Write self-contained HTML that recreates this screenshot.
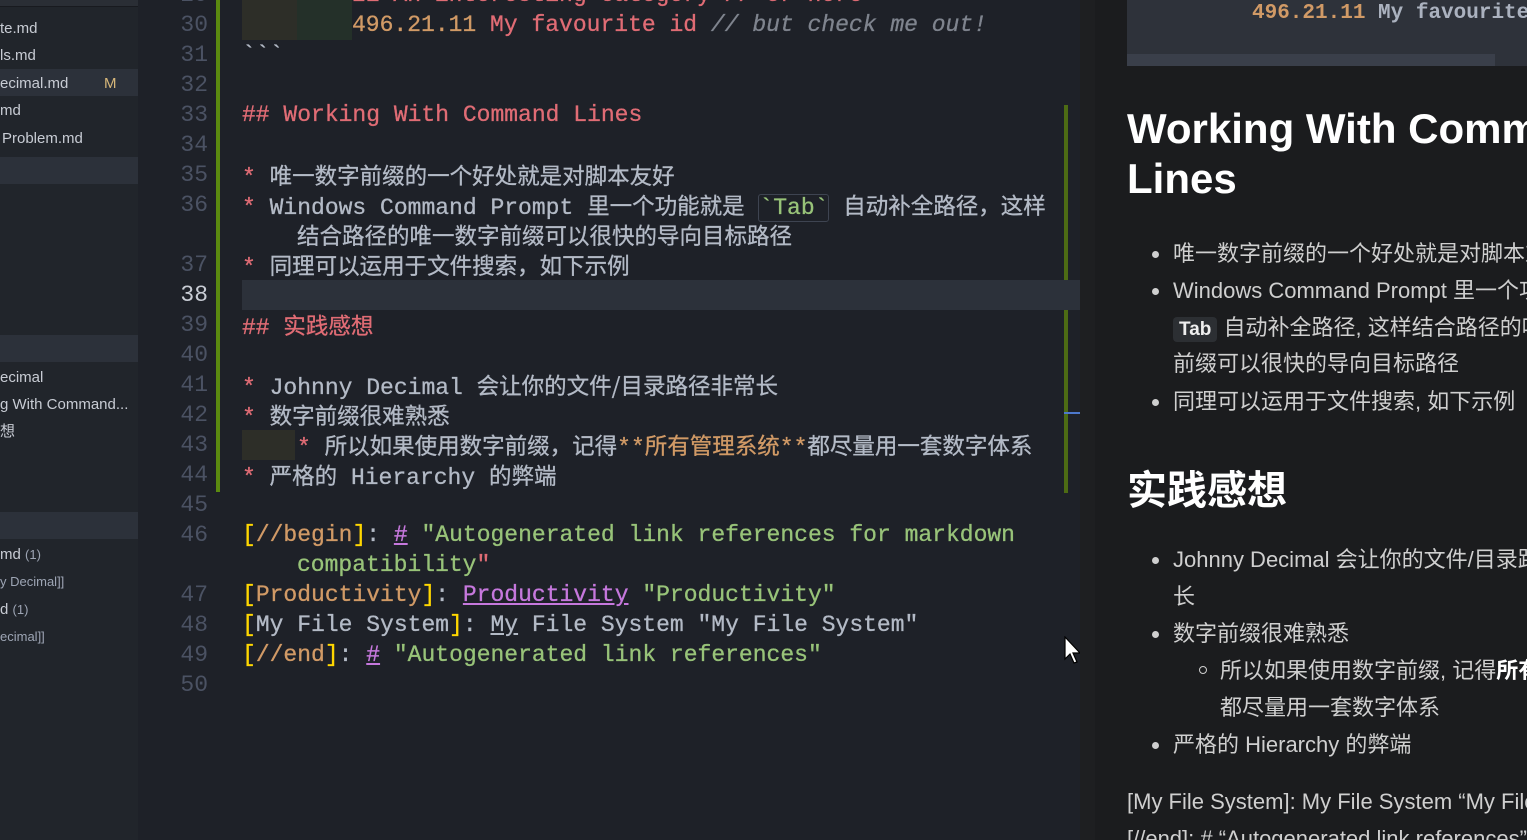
<!DOCTYPE html>
<html><head><meta charset="utf-8"><style>
*{margin:0;padding:0;box-sizing:border-box}
body{width:1527px;height:840px;overflow:hidden;background:#1e2128;position:relative;font-family:"Liberation Sans","Noto Sans CJK SC",sans-serif}
.sb{position:absolute;left:0;top:0;width:138px;height:840px;background:#21252b;overflow:hidden}
.sb div{position:absolute;left:0;white-space:nowrap;font-size:15px;color:#c8ccd4;line-height:20px}
.band{background:#2c313a;height:27px;width:138px}
.ed{position:absolute;left:138px;top:0;width:942px;height:840px;background:#1e2128;overflow:hidden}
.ln{position:absolute;left:0;width:70px;text-align:right;font:23px "Liberation Mono",monospace;color:#4b5263;line-height:30px}
.cl{position:absolute;left:104px;white-space:pre;font:23px "Liberation Mono","Noto Sans CJK SC",monospace;color:#b3bac6;line-height:30px;-webkit-text-stroke:0.3px currentColor}
.r{color:#e06c75}.o{color:#d19a66}.g{color:#98c379}.p{color:#c678dd}.y{color:#e5c07b}.gy{color:#7f848e;font-style:italic}.yb{color:#ffd700}
.cj{font-family:"Noto Sans CJK SC",sans-serif;font-size:22.5px}
.pv{position:absolute;left:1080px;top:0;width:447px;height:840px;background:#1b1c1e;overflow:hidden;color:#cfcfcf}
.pv .t{position:absolute;white-space:nowrap;font-size:22px;line-height:36px}
.dot{position:absolute;width:7px;height:7px;border-radius:50%;background:#cfcfcf}
</style></head><body>
<div class="sb">
 <div style="top:0;height:7px;width:138px;background:#2a2e35;border-bottom:1px solid #181a1f"></div>
 <div style="top:19px">te.md</div>
 <div style="top:46px">ls.md</div>
 <div class="band" style="top:69px"></div>
 <div style="top:74px">ecimal.md</div>
 <div style="top:74px;left:104px;color:#d7b77a">M</div>
 <div style="top:101px">md</div>
 <div style="top:129px;left:2px">Problem.md</div>
 <div class="band" style="top:157px"></div>
 <div class="band" style="top:335px"></div>
 <div style="top:368px">ecimal</div>
 <div style="top:395px">g With Command...</div>
 <div style="top:422px">想</div>
 <div class="band" style="top:512px"></div>
 <div style="top:545px">md <span style="font-size:13px;color:#9da5b4">(1)</span></div>
 <div style="top:572px;font-size:13px;color:#9da5b4">y Decimal]]</div>
 <div style="top:600px">d <span style="font-size:13px;color:#9da5b4">(1)</span></div>
 <div style="top:627px;font-size:13px;color:#9da5b4">ecimal]]</div>
</div>
<div class="ed">
 <div style="position:absolute;left:78px;top:0;width:4px;height:492px;background:#5b8a10"></div>
 <div style="position:absolute;left:926px;top:105px;width:4px;height:388px;background:#4d6b14"></div>
 <div style="position:absolute;left:926px;top:412px;width:16px;height:2px;background:#4d78cc"></div>
 <div style="position:absolute;left:104px;top:0;width:55px;height:40px;background:#2d2e28"></div>
 <div style="position:absolute;left:159px;top:0;width:55px;height:40px;background:#243029"></div>
 <div style="position:absolute;left:104px;top:430px;width:53px;height:30px;background:#2d2e28"></div>
 <div style="position:absolute;left:104px;top:280px;width:838px;height:30px;background:#2c313a"></div>
 <div class="ln" style="top:-20px">29</div>
 <div class="ln" style="top:10px">30</div><div class="ln" style="top:40px">31</div><div class="ln" style="top:70px">32</div>
 <div class="ln" style="top:100px">33</div><div class="ln" style="top:130px">34</div><div class="ln" style="top:160px">35</div>
 <div class="ln" style="top:190px">36</div><div class="ln" style="top:250px">37</div><div class="ln" style="top:280px;color:#c8ccd4">38</div>
 <div class="ln" style="top:310px">39</div><div class="ln" style="top:340px">40</div><div class="ln" style="top:370px">41</div>
 <div class="ln" style="top:400px">42</div><div class="ln" style="top:430px">43</div><div class="ln" style="top:460px">44</div>
 <div class="ln" style="top:490px">45</div><div class="ln" style="top:520px">46</div><div class="ln" style="top:580px">47</div>
 <div class="ln" style="top:610px">48</div><div class="ln" style="top:640px">49</div><div class="ln" style="top:670px">50</div>
 <div class="cl r" style="top:-20px;left:214px">21 An interesting category // or here</div>
 <div class="cl" style="top:10px;left:214px"><span class="o">496.21.11</span> <span class="r">My favourite id</span> <span class="gy">// but check me out!</span></div>
 <div class="cl" style="top:40px">&#96;&#96;&#96;</div>
 <div class="cl r" style="top:100px">## Working With Command Lines</div>
 <div class="cl" style="top:160px"><span class="r">*</span> <span class="cj">唯一数字前缀的一个好处就是对脚本友好</span></div>
 <div class="cl" style="top:190px"><span class="r">*</span> Windows Command Prompt <span class="cj">里一个功能就是</span> <span class="g" style="border:1px solid #3e4451;border-radius:3px">&#96;Tab&#96;</span> <span class="cj">自动补全路径，这样</span></div>
 <div class="cl" style="top:220px;left:159px"><span class="cj">结合路径的唯一数字前缀可以很快的导向目标路径</span></div>
 <div class="cl" style="top:250px"><span class="r">*</span> <span class="cj">同理可以运用于文件搜索，如下示例</span></div>
 <div class="cl r" style="top:310px">## <span class="cj">实践感想</span></div>
 <div class="cl" style="top:370px"><span class="r">*</span> Johnny Decimal <span class="cj">会让你的文件/目录路径非常长</span></div>
 <div class="cl" style="top:400px"><span class="r">*</span> <span class="cj">数字前缀很难熟悉</span></div>
 <div class="cl" style="top:430px;left:159px"><span class="r">*</span> <span class="cj">所以如果使用数字前缀，记得</span><span class="o">**<span class="cj">所有管理系统</span>**</span><span class="cj">都尽量用一套数字体系</span></div>
 <div class="cl" style="top:460px"><span class="r">*</span> <span class="cj">严格的</span> Hierarchy <span class="cj">的弊端</span></div>
 <div class="cl" style="top:520px"><span class="yb">[</span><span class="o">//begin</span><span class="yb">]</span>: <span class="p" style="text-decoration:underline">#</span> <span class="g">"Autogenerated link references for markdown</span></div>
 <div class="cl g" style="top:550px;left:159px">compatibility<span class="r">"</span></div>
 <div class="cl" style="top:580px"><span class="yb">[</span><span class="o">Productivity</span><span class="yb">]</span>: <span class="p" style="text-decoration:underline">Productivity</span> <span class="g">"Productivity"</span></div>
 <div class="cl" style="top:610px"><span class="yb">[</span>My File System<span class="yb">]</span>: <u>My</u> File System "My File System"</div>
 <div class="cl" style="top:640px"><span class="yb">[</span><span class="o">//end</span><span class="yb">]</span>: <span class="p" style="text-decoration:underline">#</span> <span class="g">"Autogenerated link references"</span></div>
</div>
<svg style="position:absolute;left:1064px;top:636px" width="20" height="30" viewBox="0 0 20 30"><path d="M1 1 L1 23 L6 18 L10 27 L13 26 L9 17 L16 17 Z" fill="#fff" stroke="#000" stroke-width="1.2"/></svg>
<div class="pv">
 <div style="position:absolute;left:0;top:0;width:15px;height:840px;background:#1e1f21"></div>
 <div style="position:absolute;left:47px;top:-10px;width:420px;height:76px;background:#2e323a;border-radius:4px"></div>
 <div style="position:absolute;left:47px;top:54px;width:368px;height:12px;background:#3a3f4a"></div>
 <div style="position:absolute;left:172px;top:0;white-space:nowrap;font:bold 21px 'Liberation Mono',monospace;line-height:28px"><span style="color:#d19a66">496.21.11</span> <span style="color:#abb2bf">My favourite</span></div>
 <div style="position:absolute;left:47px;top:104px;font:bold 42px 'Liberation Sans',sans-serif;color:#fff;line-height:50px;white-space:nowrap">Working With Comm<br>Lines</div>
 <div class="dot" style="left:72px;top:251px"></div><div class="t" style="left:93px;top:236px">唯一数字前缀的一个好处就是对脚本友好</div>
 <div class="dot" style="left:72px;top:288px"></div><div class="t" style="left:93px;top:273px">Windows Command Prompt 里一个功能就是</div>
 <div class="t" style="left:93px;top:310px"><span style="background:#2c2f33;border-radius:4px;padding:2px 6px;font-size:19px;font-weight:bold;color:#eee">Tab</span> 自动补全路径, 这样结合路径的唯一数字</div>
 <div class="t" style="left:93px;top:346px">前缀可以很快的导向目标路径</div>
 <div class="dot" style="left:72px;top:399px"></div><div class="t" style="left:93px;top:384px">同理可以运用于文件搜索, 如下示例</div>
 <div style="position:absolute;left:47px;top:458px;font:bold 40px 'Liberation Sans','Noto Sans CJK SC',sans-serif;color:#fff;white-space:nowrap">实践感想</div>
 <div class="dot" style="left:72px;top:557px"></div><div class="t" style="left:93px;top:542px">Johnny Decimal 会让你的文件/目录路径非常</div>
 <div class="t" style="left:93px;top:579px">长</div>
 <div class="dot" style="left:72px;top:631px"></div><div class="t" style="left:93px;top:616px">数字前缀很难熟悉</div>
 <div style="position:absolute;left:119px;top:666px;width:8px;height:8px;border:1px solid #cfcfcf;border-radius:50%"></div>
 <div class="t" style="left:140px;top:653px">所以如果使用数字前缀, 记得<b style="color:#fff">所有管理系统</b></div>
 <div class="t" style="left:140px;top:690px">都尽量用一套数字体系</div>
 <div class="dot" style="left:72px;top:742px"></div><div class="t" style="left:93px;top:727px">严格的 Hierarchy 的弊端</div>
 <div class="t" style="left:47px;top:784px">[My File System]: My File System “My File System”</div>
 <div class="t" style="left:47px;top:821px">[//end]: # “Autogenerated link references”</div>
</div>
</body></html>
